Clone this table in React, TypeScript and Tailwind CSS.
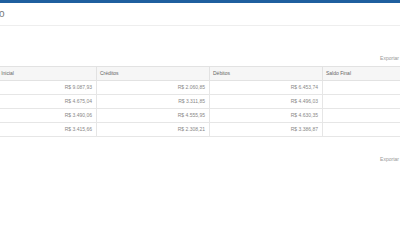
const rows = [
  ['R$ 9.087,93', 'R$ 2.060,85', 'R$ 6.453,74', ''],
  ['R$ 4.675,04', 'R$ 3.311,85', 'R$ 4.496,03', ''],
  ['R$ 3.490,06', 'R$ 4.555,95', 'R$ 4.630,35', ''],
  ['R$ 3.415,66', 'R$ 2.308,21', 'R$ 3.386,87', ''],
];

const headers = ['Saldo Inicial', 'Créditos', 'Débitos', 'Saldo Final'];

export default function App() {
  return (
    <div className="w-[400px] h-[240px] overflow-hidden bg-white font-['Liberation_Sans',Arial,sans-serif]">
      {/* Top bar */}
      <div className="h-[3px] bg-[#1f5f9f]" />

      {/* Title */}
      <div className="h-[23px] flex items-center border-b border-[#eeeeee]">
        <span className="-ml-[21px] text-[10px] leading-[12px] text-[#777]">Saldo</span>
      </div>

      {/* Export link */}
      <div className="flex justify-end pt-[29px] pr-[1px]">
        <span className="text-[5px] leading-[6px] text-[#999]">Exportar</span>
      </div>

      {/* Table */}
      <div className="mt-[5px] -ml-[16px] w-[452px] border-t border-[#e2e2e2]">
        <div className="grid grid-cols-[113px_113px_113px_113px] h-[14px] bg-[#f6f6f6] border-b border-[#e2e2e2]">
          {headers.map((h) => (
            <div key={h} className="flex items-center pl-[3px] border-r border-[#e2e2e2] text-[5px] text-[#666]">
              {h}
            </div>
          ))}
        </div>
        {rows.map((row, i) => (
          <div key={i} className="grid grid-cols-[113px_113px_113px_113px] h-[14px] border-b border-[#e6e6e6]">
            {row.map((v, j) => (
              <div key={j} className="flex items-center justify-end pr-[4px] border-r border-[#e6e6e6] text-[5px] text-[#888]">
                {v}
              </div>
            ))}
          </div>
        ))}
      </div>

      {/* Export link bottom */}
      <div className="flex justify-end mt-[19px] pr-[1px]">
        <span className="text-[5px] leading-[6px] text-[#999]">Exportar</span>
      </div>
    </div>
  );
}
